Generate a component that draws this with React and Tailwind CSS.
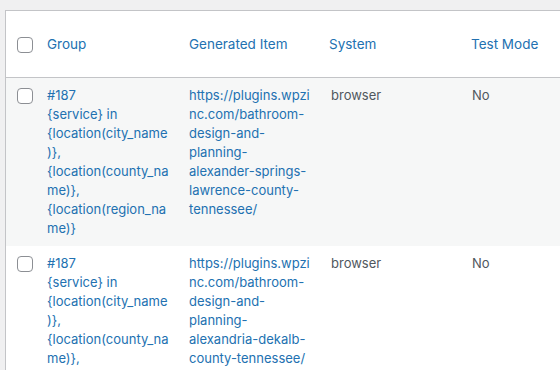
const filas = [
  {
    grupo: ['#187', '{service} in', '{location(city_name', ')},', '{location(county_na', 'me)},', '{location(region_na', 'me)}'],
    url: ['https://plugins.wpzi', 'nc.com/bathroom-', 'design-and-', 'planning-', 'alexander-springs-', 'lawrence-county-', 'tennessee/'],
    sistema: 'browser',
    prueba: 'No',
  },
  {
    grupo: ['#187', '{service} in', '{location(city_name', ')},', '{location(county_na', 'me)},', '{location(region_na', 'me)}'],
    url: ['https://plugins.wpzi', 'nc.com/bathroom-', 'design-and-', 'planning-', 'alexandria-dekalb-', 'county-tennessee/'],
    sistema: 'browser',
    prueba: 'No',
  },
];

function Casilla() {
  return <span className="block w-4 h-4 rounded-[4px] border border-[#8c8f94] bg-white" />;
}

// Tabla de items generados, estilo listado de WordPress.
export default function App() {
  const cols = 'grid grid-cols-[41px_142px_140px_142px_1fr]';
  return (
    <div className="w-[560px] h-[370px] overflow-hidden bg-[#f0f0f1] pt-[10px] pl-[5px] font-['Inter',Arial,sans-serif] text-[13px]">
      <div className="w-[600px] border-t border-l border-[#c3c4c7] bg-white">
        <div className={`${cols} h-[67px] items-center border-b border-[#c3c4c7] text-[13.5px] text-[#2271b1]`}>
          <div className="pl-[11px] pt-[1px]"><Casilla /></div>
          <div>Group</div>
          <div>Generated Item</div>
          <div>System</div>
          <div>Test Mode</div>
        </div>
        {filas.map((f, i) => (
          <div key={i} className={`${cols} py-[8px] leading-[19px] ${i % 2 === 0 ? 'bg-[#f6f7f7]' : 'bg-white'}`}>
            <div className="pl-[11px] pt-[2px]"><Casilla /></div>
            <div className="text-[#2271b1] whitespace-nowrap">
              {f.grupo.map((l, j) => <div key={j}>{l}</div>)}
            </div>
            <div className="text-[#2271b1] whitespace-nowrap">
              {f.url.map((l, j) => <div key={j}>{l}</div>)}
            </div>
            <div className="pl-[2px] text-[#50575e]">{f.sistema}</div>
            <div className="pl-[1px] text-[#50575e]">{f.prueba}</div>
          </div>
        ))}
      </div>
    </div>
  );
}
